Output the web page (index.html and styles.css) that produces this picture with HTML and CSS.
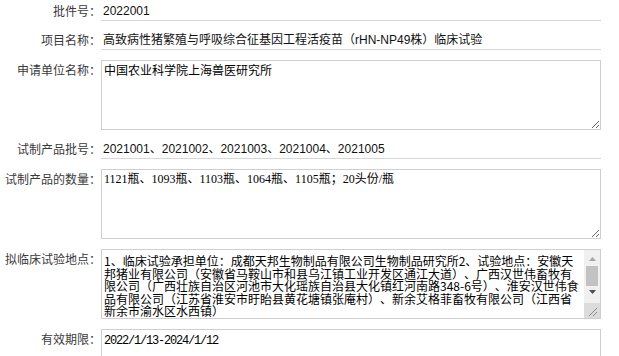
FILE: index.html
```html
<!DOCTYPE html>
<html lang="zh-CN">
<head>
<meta charset="utf-8">
<title>批件信息</title>
<link rel="stylesheet" href="styles.css">
</head>
<body>
<div class="form">
  <div class="row">
    <div class="label">批件号：</div>
    <div class="value">2022001</div>
  </div>
  <div class="row">
    <div class="label">项目名称：</div>
    <div class="value">高致病性猪繁殖与呼吸综合征基因工程活疫苗（rHN-NP49株）临床试验</div>
  </div>
  <div class="row">
    <div class="label label-box">申请单位名称：</div>
    <textarea class="box box-sans">中国农业科学院上海兽医研究所</textarea>
  </div>
  <div class="row">
    <div class="label">试制产品批号：</div>
    <div class="value">2021001、2021002、2021003、2021004、2021005</div>
  </div>
  <div class="row">
    <div class="label label-box">试制产品的数量：</div>
    <textarea class="box box-serif">1121瓶、1093瓶、1103瓶、1064瓶、1105瓶；20头份/瓶</textarea>
  </div>
  <div class="row">
    <div class="label label-box">拟临床试验地点：</div>
    <div class="field">
      <textarea class="box box-dense">1、临床试验承担单位：成都天邦生物制品有限公司生物制品研究所2、试验地点：安徽天邦猪业有限公司（安徽省马鞍山市和县乌江镇工业开发区通江大道）、广西汉世伟畜牧有限公司（广西壮族自治区河池市大化瑶族自治县大化镇红河南路348-6号）、淮安汉世伟食品有限公司（江苏省淮安市盱眙县黄花塘镇张庵村）、新余艾格菲畜牧有限公司（江西省新余市渝水区水西镇）</textarea>
      <div class="sb" aria-hidden="true">
        <div class="sb-btn sb-up">
          <svg width="7" height="4" viewBox="0 0 7 4"><polygon points="0,4 3.5,0 7,4" fill="#a6a6a6"/></svg>
        </div>
        <div class="sb-thumb"></div>
        <div class="sb-btn sb-down">
          <svg width="7" height="4" viewBox="0 0 7 4"><polygon points="0,0 7,0 3.5,4" fill="#4f4f4f"/></svg>
        </div>
        <div class="sb-corner">
          <svg width="16" height="14" viewBox="0 0 16 14"><line x1="13" y1="4" x2="5" y2="12" stroke="#8a8a8a" stroke-width="1"/><line x1="13" y1="8" x2="9" y2="12" stroke="#8a8a8a" stroke-width="1"/></svg>
        </div>
      </div>
    </div>
  </div>
  <div class="row">
    <div class="label label-box">有效期限：</div>
    <textarea class="box box-mono">2022/1/13-2024/1/12</textarea>
  </div>
</div>
</body>
</html>
```

FILE: styles.css
```css
html, body {
  margin: 0;
  padding: 0;
  overflow: hidden;
  background: #ffffff;
}

.form {
  width: 601px;
  margin-top: -8px;
  font-family: "Noto Sans CJK SC", "Liberation Sans", sans-serif;
  font-size: 12px;
  text-spacing-trim: space-all;
}

.row {
  display: grid;
  grid-template-columns: 101px 500px;
  align-items: start;
  padding-top: 10px;
}

.label {
  text-align: right;
  line-height: 18px;
  color: #3a3a3a;
  white-space: nowrap;
}

.label-box {
  margin-top: 1px;
}

.value {
  padding-left: 2px;
  line-height: 18px;
  color: #111111;
  border-bottom: 1px solid #d6d6d6;
  font-family: "Liberation Sans", "Noto Sans CJK SC", sans-serif;
  white-space: nowrap;
}

.box {
  display: block;
  box-sizing: border-box;
  width: 500px;
  height: 70px;
  margin: 0;
  padding: 1px 2px;
  border: 1px solid #cfcfcf;
  border-radius: 0;
  font-size: 12px;
  line-height: 16px;
  color: #000000;
  background: #ffffff;
  outline: none;
  text-spacing-trim: space-all;
}

.box-sans {
  font-family: "Noto Sans CJK SC", sans-serif;
}

.box-serif {
  font-family: "Liberation Serif", "Noto Sans CJK SC", serif;
}

.field {
  position: relative;
  width: 500px;
  height: 70px;
}

.box-dense {
  font-family: "Noto Sans CJK SC", sans-serif;
  line-height: 12.5px;
  padding: 5px 19px 1px 2px;
  overflow: hidden;
  resize: none;
}

.box-mono {
  font-family: "Liberation Mono", "Noto Sans CJK SC", monospace;
  letter-spacing: -1.2px;
  padding-top: 3px;
}

/* scrollbar drawn over the textarea's right edge */
.sb {
  position: absolute;
  top: 1px;
  right: 1px;
  bottom: 1px;
  width: 16px;
  display: flex;
  flex-direction: column;
  background: #f0f0f0;
}

.sb-btn {
  display: flex;
  justify-content: center;
  flex: none;
}

.sb-up {
  height: 16px;
  align-items: center;
}

.sb-up svg {
  margin-top: 1px;
}

.sb-thumb {
  flex: none;
  height: 20px;
  margin: 0 2px;
  background: #c3c3c3;
}

.sb-down {
  height: 17px;
  align-items: flex-start;
  padding-top: 4px;
  box-sizing: border-box;
}

.sb-corner {
  flex: 1;
  background: #dcdcdc;
  display: flex;
  align-items: flex-end;
}
```
